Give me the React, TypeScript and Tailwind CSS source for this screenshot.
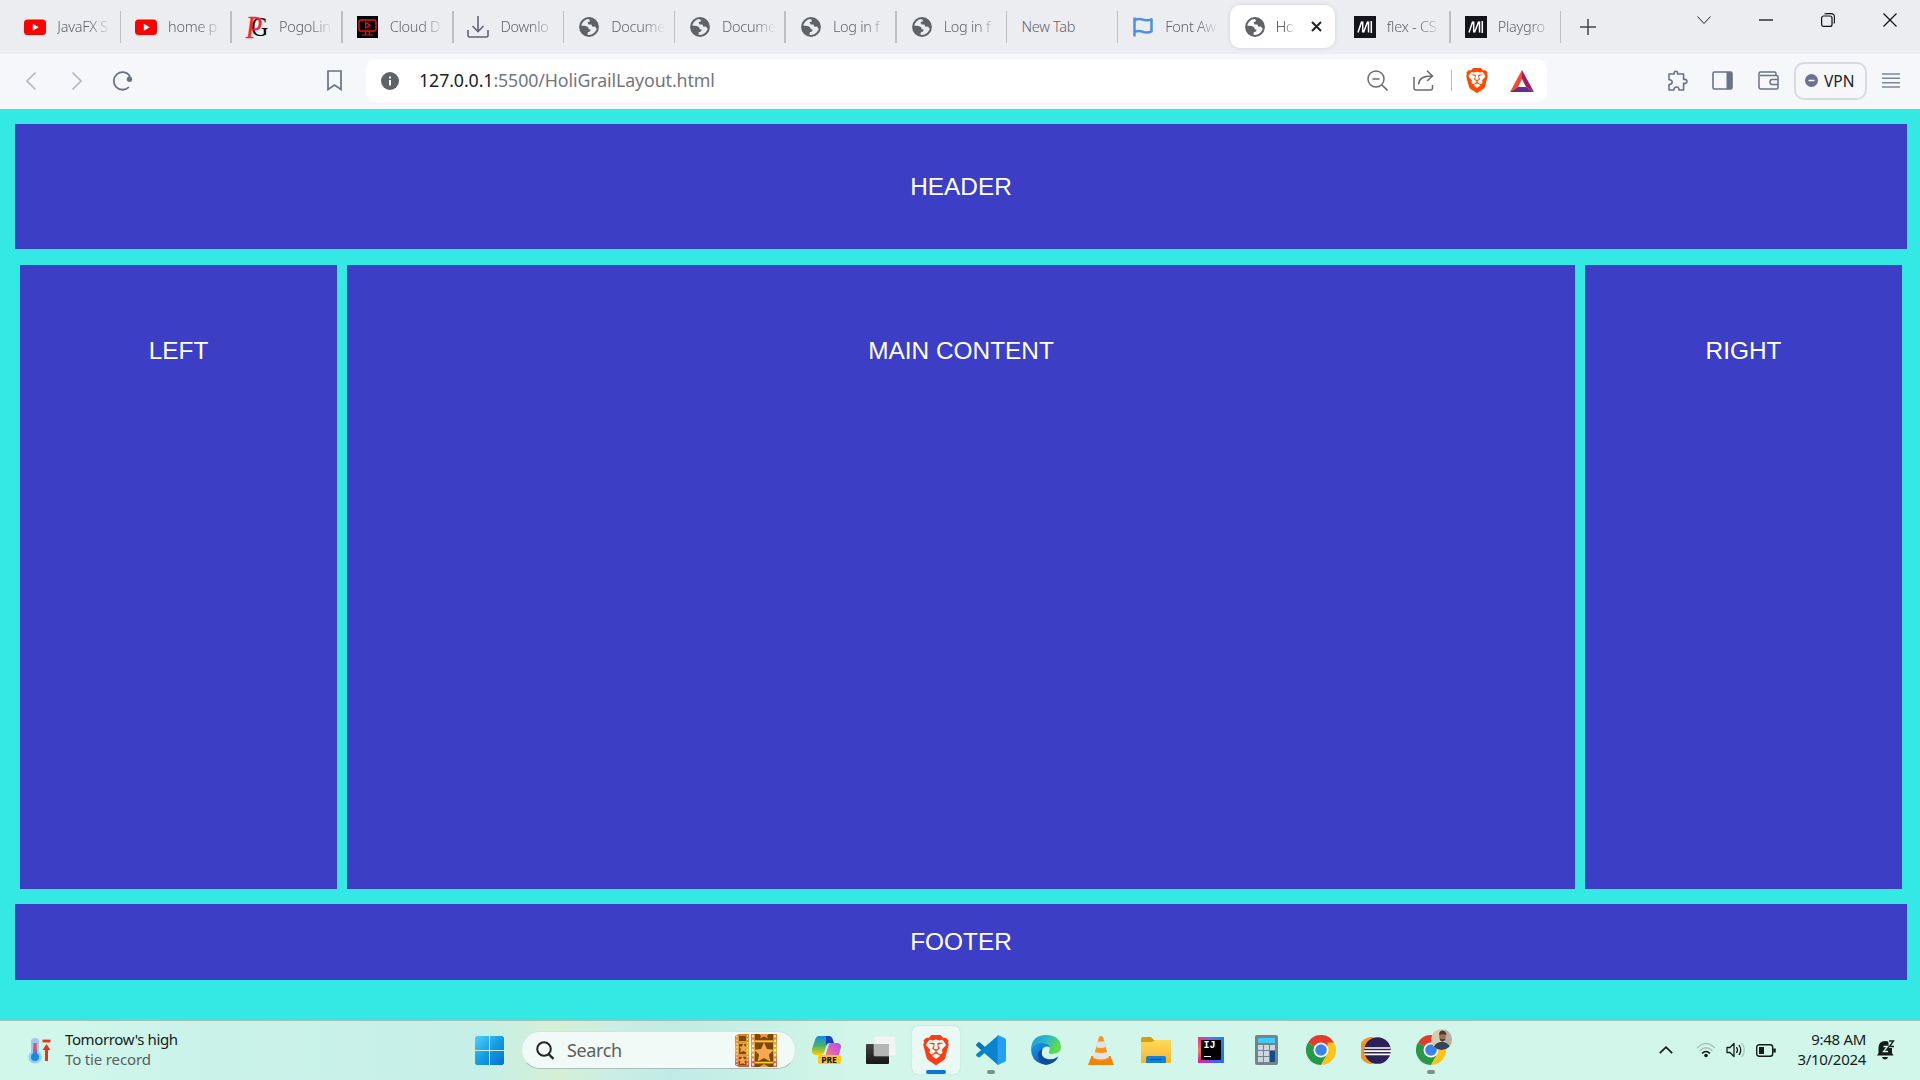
import React from 'react';
import { SiBrave } from 'react-icons/si';

type P = { children?: React.ReactNode; className?: string };

const Svg = ({ w, h, vb, className = '', children }: P & { w: number; h: number; vb?: string }) => (
  <svg width={w} height={h} viewBox={vb ?? `0 0 ${w} ${h}`} fill="none" preserveAspectRatio="none" className={`block shrink-0 ${className}`}>
    {children}
  </svg>
);

const YouTube = () => (
  <Svg w={22} h={22}>
    <rect y="3.5" width="22" height="15.5" rx="3.5" fill="#f00" />
    <path d="M8.8 7.8v7l6-3.5z" fill="#fff" />
  </Svg>
);
const Pogo = () => (
  <Svg w={22} h={22} className="overflow-visible font-['Liberation_Serif',serif]">
    <text x="5" y="20" fontSize="28" fill="#080808" textLength="17" lengthAdjust="spacingAndGlyphs">G</text>
    <text x="0" y="21.500" fontSize="32" fontStyle="italic" fill="#fb2230" stroke="#fb2230" strokeWidth=".300" textLength="16" lengthAdjust="spacingAndGlyphs">P</text>
  </Svg>
);
const Cloud = () => (
  <Svg w={21} h={22}>
    <rect width="21" height="22" fill="#000" />
    <rect x="2" y="4" width="17" height="11" rx="2" stroke="#f0141e" strokeWidth="1.4" />
    <path d="M8.7 6.5v5.4l4.5-2.7zM8.5 15v3.5M12.5 15v3.5M5 19h11" stroke="#f0141e" strokeWidth="1.2" />
  </Svg>
);
const Download = () => (
  <Svg w={22} h={22}>
    <path d="M1 14v5.5q0 1.5 1.5 1.5h17q1.5 0 1.5-1.5V14M11 0v15M5.5 10l5.5 5.5 5.5-5.5" stroke="#62627c" strokeWidth="1.6" />
  </Svg>
);
const Globe = () => (
  <Svg w={20} h={20}>
    <circle cx="10" cy="10" r="8.9" stroke="#5f6368" strokeWidth="2" />
    <path d="M8.5 1C11 0 17 2 18.500 7c.8 3-.2 4.700-1.300 4.200l-1.200-1.700-2.600.3-1-2.300H9.600L8.500 5.200l2.300-.7V3z" fill="#5f6368" />
    <path d="M1.200 8.500 6.800 9l2.300 1.200.7 2 1.900.2-.7 2.200-2.200.6-.5 3.500C4 18 .8 14 1.200 8.500z" fill="#5f6368" />
  </Svg>
);
const Flag = () => (
  <Svg w={20} h={20}>
    <path d="M1.500.5v19M1.500 3q4.500-2 8.500-.4 4 1.600 8.500-.3v12q-4.500 2-8.500.5-4-1.500-8.500 0" stroke="#4b8fe8" strokeWidth="2.500" strokeLinejoin="round" />
  </Svg>
);
const Mdn = () => (
  <Svg w={22} h={22}>
    <rect width="22" height="22" fill="#15141a" />
    <path d="M4 16.500 7.700 5.500M8.700 5.500v11M9.500 16.500 13.700 5.500M14.500 5.500v11M17.300 5v12" stroke="#fff" strokeWidth="1.500" />
  </Svg>
);

const tabs: { icon?: React.ReactNode; text: string; active?: boolean; sep?: boolean; small?: boolean }[] = [
  { icon: <YouTube />, text: 'JavaFX S', sep: true },
  { icon: <YouTube />, text: 'home p', sep: true },
  { icon: <Pogo />, text: 'PogoLin', sep: true },
  { icon: <Cloud />, text: 'Cloud D', sep: true },
  { icon: <Download />, text: 'Downlo', sep: true },
  { icon: <Globe />, text: 'Docume', sep: true, small: true },
  { icon: <Globe />, text: 'Docume', sep: true, small: true },
  { icon: <Globe />, text: 'Log in f', sep: true, small: true },
  { icon: <Globe />, text: 'Log in f', sep: true, small: true },
  { text: 'New Tab', sep: true },
  { icon: <Flag />, text: 'Font Aw', small: true },
  { icon: <Globe />, text: 'Ho', active: true },
  { icon: <Mdn />, text: 'flex - CS', sep: true },
  { icon: <Mdn />, text: 'Playgro', sep: true },
];

const Tab = ({ t }: { t: (typeof tabs)[number] }) =>
  t.active ? (
    <div className="w-[110.800px] shrink-0 pt-[5px]">
      <div className="flex h-[43px] w-[105px] items-center rounded-[10px] bg-white pl-[15px] shadow-[0_0_4px_rgba(0,0,0,0.12)]">
        {t.icon}
        <span className="ml-[11px] w-[19px] overflow-hidden mask-r-from-40% whitespace-nowrap text-[#3b3e4f]">{t.text}</span>
        <Svg w={11} h={11} className="ml-[16px]"><path d="m1 1 9 9m0-9-9 9" stroke="#222" strokeWidth="2" /></Svg>
      </div>
    </div>
  ) : (
    <div className="flex h-full w-[110.800px] shrink-0 items-center pr-[0.700px] pl-[13.300px]">
      {t.icon && <div className={`flex w-[33px] shrink-0 ${t.small ? 'pl-px' : ''}`}>{t.icon}</div>}
      <span className={`overflow-hidden whitespace-nowrap text-[#62656c] ${t.icon ? 'w-[54px] mask-r-from-60%' : 'w-[84px]'}`}>{t.text}</span>
      <div className={`ml-auto h-8 w-[1.500px] ${t.sep ? 'bg-[#bfbfbf]' : ''}`} />
    </div>
  );

const Brave = ({ w, h, color }: { w: number; h: number; color: string }) => (
  <div className="grid shrink-0 place-items-center">
    <SiBrave color={color} preserveAspectRatio="none" viewBox="1.600 0 20.800 24" style={{ width: w, height: h }} />
  </div>
);

const TabStrip = () => (
  <div className="flex h-[54px] shrink-0 bg-[#ecedf1] pl-[11px] text-[14.500px] font-light tracking-[-0.020em]">
    {tabs.map((t, i) => <Tab key={i} t={t} />)}
    <Svg w={16} h={16} className="mt-[19px] ml-[18px]"><path d="M8 0v16M0 8h16" stroke="#444" strokeWidth="1.500" /></Svg>
    <div className="mt-[13px] ml-auto flex h-[14px] items-center gap-[48px] pr-[23px]">
      <Svg w={14} h={8}><path d="m.500.500 6.500 7 6.500-7" stroke="#222" /></Svg>
      <Svg w={14} h={2}><path d="M0 1h14" stroke="#111" strokeWidth="1.300" /></Svg>
      <Svg w={14} h={14}><rect x=".600" y="3" width="10.400" height="10.400" rx="2" stroke="#111" strokeWidth="1.200" /><path d="M3.500 1Q4.500.600 5.500.600h4.500q3.400 0 3.400 3.400v4.500q0 1-.600 2" stroke="#111" strokeWidth="1.100" /></Svg>
      <Svg w={14} h={14}><path d="m.500.500 13 13m0-13-13 13" stroke="#111" strokeWidth="1.200" /></Svg>
    </div>
  </div>
);

const Toolbar = () => (
  <div className="flex h-[55px] shrink-0 items-center bg-[#f5f7fa] pb-[2px]">
    <Svg w={10} h={18} className="ml-[26px]"><path d="M9.500.500 1 9l8.500 8.500" stroke="#b6bac4" strokeWidth="1.700" /></Svg>
    <Svg w={10} h={18} className="ml-[36px]"><path d="M.500.500 9 9 .500 17.500" stroke="#b6bac4" strokeWidth="1.700" /></Svg>
    <Svg w={21} h={20} className="ml-[30px]">
      <path d="M17.500 4.500A8.800 8.800 0 1 0 17 16" stroke="#687485" strokeWidth="1.800" />
      <path d="M17.500 4v4" stroke="#687485" strokeWidth="1.800" /><circle cx="17.500" cy="8.300" r="2.700" fill="#687485" />
    </Svg>
    <Svg w={15} h={21} className="ml-[194px]"><path d="M1 1h13v18.500L7.500 15 1 19.500z" stroke="#687485" strokeWidth="1.700" /></Svg>
    <div className="ml-[24px] flex h-[43px] w-[1181px] shrink-0 items-center rounded-[10px] bg-white pl-[15px]">
      <Svg w={18} h={18}><circle cx="9" cy="9" r="9" fill="#5f6368" /><path d="M9 8v5.500M9 4.500v2" stroke="#fff" strokeWidth="2" /></Svg>
      <div className="mb-px ml-[20px] w-[320px] text-[17.800px] leading-6 font-normal tracking-[-0.006em] whitespace-nowrap text-[#73767c]">
        <span className="text-[#222]">127.0.0.1</span>:5500/HoliGrailLayout.html
      </div>
      <Svg w={21} h={21} className="ml-[628px]"><circle cx="9" cy="9" r="8" stroke="#6b6b6b" strokeWidth="1.500" /><path d="M5.500 9h7M15 15l5.500 5.500" stroke="#6b6b6b" strokeWidth="1.600" /></Svg>
      <Svg w={21} h={21} className="ml-[25px]"><path d="M1 7v11q0 2 2 2h14.500q2 0 2-2v-3M5.500 14.500Q6 6 18.500 6M14 .800 19.500 6 14 11" stroke="#6b6b6b" strokeWidth="1.500" /></Svg>
      <div className="mr-[14px] ml-[17px] h-[21px] w-px bg-[#b5b5b5]" />
      <Brave w={22} h={25} color="#ff4a00" />
      <Svg w={24} h={22} className="ml-[22px]">
        <path d="M12 0 0 22l8-5 4-8z" fill="#ff4724" /><path d="M12 0 24 22l-8-5-4-8z" fill="#9e1f63" /><path d="M0 22h24l-8-5H8z" fill="#662d91" />
      </Svg>
    </div>
    <Svg w={21} h={21} className="ml-[120px]">
      <path d="M2 4h5.200C6 .500 11.700.500 10.600 4h6v5.500c4.500-1.200 4.500 5 0 3.700V20h-4.600c.500-4-5.400-4-5 0H2v-5.500c4.200 0 4.200-5 0-4.800z" stroke="#687485" strokeWidth="1.600" strokeLinejoin="round" />
    </Svg>
    <Svg w={21} h={19} className="ml-[24px]"><rect x="1" y="1" width="19" height="17" rx="1.500" stroke="#687485" strokeWidth="1.600" /><path d="M14.500 1H20v17h-5.500z" fill="#687485" /></Svg>
    <Svg w={21} h={19} className="ml-[25px]">
      <path d="M18 4.500V2.500Q18 1 16.500 1h-14Q1 1 1 2.500V16q0 2 2 2h15.500q1.500 0 1.500-1.500V6q0-1.500-1.500-1.500H2M20 8.500h-6q-2 0-2 2.500t2 2.500h6" stroke="#687485" strokeWidth="1.500" />
    </Svg>
    <div className="ml-[15px] flex h-[38px] w-[73px] shrink-0 items-center rounded-[10px] border-2 border-[#d8dbe2] pl-[9px] text-[15.500px] leading-5 text-[#222]">
      <Svg w={13} h={13}><circle cx="6.500" cy="6.500" r="6.500" fill="#6b7094" /><path d="M3.500 6.500h6" stroke="#fff" strokeWidth="1.500" /></Svg>
      <span className="ml-[6px]">VPN</span>
    </div>
    <Svg w={18} h={15} className="ml-[15px]"><path d="M0 1h18M0 5.300h18M0 9.700h18M0 14h18" stroke="#7c8799" strokeWidth="1.400" /></Svg>
  </div>
);

const Panel = ({ children, className = '' }: P) => (
  <div className={`bg-[#3c3fc6] text-center font-['Liberation_Sans',sans-serif] text-[24.400px] leading-[28px] text-white ${className}`}>{children}</div>
);

const Page = () => (
  <div className="h-[911px] shrink-0 bg-[#34e8e4] pt-[15px] pr-[13px] pl-[15px]">
    <Panel className="h-[125px] pt-[49px]">HEADER</Panel>
    <div className="mt-4 flex h-[624px] gap-[10px] px-[5px]">
      <Panel className="w-[317px] shrink-0 pt-[72px]">LEFT</Panel>
      <Panel className="flex-1 pt-[72px]">MAIN CONTENT</Panel>
      <Panel className="w-[317px] shrink-0 pt-[72px]">RIGHT</Panel>
    </div>
    <Panel className="mt-[15px] h-[76px] pt-[24px]">FOOTER</Panel>
  </div>
);

const Windows = () => (
  <Svg w={29} h={29}>
    <defs><linearGradient id="win" x1="0" y1="0" x2="29" y2="29" gradientUnits="userSpaceOnUse"><stop stopColor="#4fd0fb" /><stop offset=".500" stopColor="#159ce4" /><stop offset="1" stopColor="#0470d0" /></linearGradient></defs>
    <path d="M1.500 0H14v14H0V1.500zM15 0h12.500L29 1.500V14H15zM0 15h14v14H1.500L0 27.500zM15 15h14v12.500L27.500 29H15z" fill="url(#win)" />
  </Svg>
);
const star = 'M13 5.500l3 6.500 7 .800-5 4.700 1.300 7-6.300-3.400-6.300 3.400 1.300-7-5-4.700 7-.800z';
const Film = () => (
  <Svg w={42} h={33}>
    <defs><linearGradient id="film" x1="0" y1="0" x2="0" y2="1"><stop stopColor="#d9812c" /><stop offset=".500" stopColor="#efb034" /><stop offset="1" stopColor="#d0564f" /></linearGradient></defs>
    <path d="M0 2 4 0h10v33H4l-4-2z" fill="url(#film)" /><path d="M4 2h7v5H4zM4 10h7v10H4zM4 23h7v8H4z" fill="#7a4a00" />
    <path d="m8.500 9 1.500 3.500 3 .300-2.500 2.200 1 3.500-3-1.500-3.500 1.500 1-3.500L4 12.800l3-.300zM7.500 22l1.500 3 3 .300-2.500 2.200 1 3-3-1.300-3 1.300 1-3L3 25.300l3-.300z" fill="#f4a64b" />
    <path d="M2 2v29M12.500 1v31" stroke="#ffe9c9" strokeWidth="1.200" strokeDasharray="1.500 2" />
    <path d="M16 0h26v33H16z" fill="url(#film)" /><path d="M20 0h18v6H20zM20 8.500h18v19H20zM20 30h18v3H20z" fill="#7a4a00" />
    <g transform="translate(16 3)"><path d={star} fill="#f8a850" /></g><path d="m24 0 2 2-1 2.500 4-2 4 2-1-2.500 2-2zM24 33l5-3 5 3z" fill="#f4953f" />
    <path d="M18 1v32M40 1v32" stroke="#fff0d5" strokeWidth="1.800" strokeDasharray="2.500 2.200" /><path d="M20 7.500h18M20 28.500h18" stroke="#f3d338" />
    <path d="M15 0v33" stroke="#f1faf6" strokeWidth="2" />
  </Svg>
);
const Copilot = () => (
  <div className="relative">
    <Svg w={29} h={28}>
      <defs>
        <linearGradient id="c1" x1="0" y1="0" x2="0" y2="1"><stop stopColor="#118ee8" /><stop offset=".500" stopColor="#45b26a" /><stop offset="1" stopColor="#ffd000" /></linearGradient>
        <linearGradient id="c2" x1="1" y1="0" x2="0" y2="1"><stop stopColor="#a452ee" /><stop offset=".500" stopColor="#e260b8" /><stop offset="1" stopColor="#ff9150" /></linearGradient>
      </defs>
      <path d="M7 0h10l-4 14q-1 5-5 5H3q-4-1-3-6L3 4q1-4 4-4z" fill="url(#c1)" />
      <path d="M14 0h3q3 0 4 4l1 3h-4q-3 0-4 3z" fill="#1741c4" />
      <path d="M19 7h6q4 0 4 4l-2 8q-1 4-5 5H12l4-13q1-4 3-4z" fill="url(#c2)" />
      <path d="M8 19h6v4h-4z" fill="#ffb42c" />
    </Svg>
    <span className="absolute top-[19px] left-[6px] h-[9px] w-[23px] rounded-[2px] bg-[#ffc814] text-center font-['Open_Sans',sans-serif] text-[8.500px] leading-[9px] font-bold text-black">PRE</span>
  </div>
);
const Desktop = () => (
  <Svg w={30} h={28}>
    <defs><linearGradient id="dk" x1="0" y1="0" x2="0" y2="1"><stop stopColor="#444" /><stop offset="1" stopColor="#161616" /></linearGradient></defs>
    <rect y="8" width="23" height="20" rx="1" fill="url(#dk)" /><rect x="8" width="22" height="20" rx="1" fill="#f2f4f3" stroke="#ddd" strokeWidth=".500" /><path d="M8 8h15v12H8z" fill="#b5b5b5" />
  </Svg>
);
const VSCode = () => (
  <Svg w={30} h={30}>
    <path d="m22 0-13 12-5-4.500q-1-.800-2 0L.500 9q-.800 1 0 2L22 29.500l.500-8.500L9 12z" fill="#0c73b9" />
    <path d="M22 30 8.500 18 4 22q-1 .800-2 0L.500 21q-.800-1 0-2L22 .500V8z" fill="#0a83cf" />
    <path d="M22 0l7 3.200q1 .600 1 1.800v20q0 1.200-1 1.800L22 30q-.500 0-.500-1V1q0-1 .500-1z" fill="#23a0ef" />
  </Svg>
);
const Edge = () => (
  <Svg w={30} h={30}>
    <defs>
      <linearGradient id="e1" x1="0" y1="0" x2="1" y2=".400"><stop stopColor="#1c96db" /><stop offset=".500" stopColor="#27b8cf" /><stop offset="1" stopColor="#63dd48" /></linearGradient>
      <linearGradient id="e2" x1="0" y1="0" x2=".600" y2="1"><stop stopColor="#1b9de2" /><stop offset="1" stopColor="#0a5bbd" /></linearGradient>
    </defs>
    <path d="M0 14Q1 0 15 0q14 0 15 12 0 7-9 7-5 0-2.500-3Q20 9 12 8 4 8 0 14z" fill="url(#e1)" />
    <path d="M0 14Q4 7 11 8q6 0 8 4-6-2-8 3-2 9 7 13-3 2-7 1Q0 26 0 14z" fill="url(#e2)" />
    <path d="M11.500 14q-3 8 5 10 6 1 11-2.500Q24 29 15 30 7 28 7 20q0-4 4.500-6z" fill="#114a9b" />
  </Svg>
);
const Vlc = () => (
  <Svg w={26} h={29}>
    <path d="M3.500 20h19l3.500 9H0z" fill="#f08408" /><path d="M11 1q2-2 4 0l6 22q-8 4-16 0z" fill="#f79420" />
    <path d="m9.800 5.500h6.400l1.600 5.500q-5 2-9.600 0zM6.600 16q6.400 2 12.800 0l1.600 5.500q-8 4-16 0z" fill="#e2e2e8" />
  </Svg>
);
const Folder = () => (
  <Svg w={30} h={27}>
    <defs><linearGradient id="fd" x1="0" y1="0" x2="0" y2="1"><stop stopColor="#ffd95c" /><stop offset="1" stopColor="#f8b52c" /></linearGradient></defs>
    <path d="M0 2q0-2 2-2h8l3 3h15q2 0 2 2v5H0z" fill="#dc9c0c" /><path d="M0 5h11l3-2h14q2 0 2 2v21H0z" fill="url(#fd)" />
    <path d="M5 26v-5q0-2 2-2h16q2 0 2 2v5z" fill="#1381d8" /><path d="M9 22.500h12" stroke="#0b5597" strokeWidth="1.200" />
  </Svg>
);
const Idea = () => (
  <div className="h-[26px] w-[26px] bg-[conic-gradient(from_270deg,#ff7b55,#ef3390_12%,#8b59ef_22%,#168bf8_35%,#087cff_60%,#7049ff_75%,#dc2890_88%,#ff7b55)] p-[3px]">
    <div className="h-5 w-5 bg-black pl-[2.500px] font-['Liberation_Mono',monospace] text-[10px] leading-[12px] font-bold text-white">IJ<div className="mt-[3.500px] h-px w-[7px] bg-white" /></div>
  </div>
);
const Calc = () => (
  <Svg w={23} h={30}>
    <rect width="23" height="30" rx="2" fill="#74838f" /><rect x="3" y="3" width="17" height="5" rx=".500" fill="#40cdf5" />
    <path d="M3 10h5v5H3zM9 10h5v5H9zM15 10h5v5h-5zM3 16h5v5H3zM9 16h5v5H9zM3 22h5v5H3zM9 22h5v5H9z" fill="#cdd6dc" /><path d="M15 16h5v11h-5z" fill="#114c8b" />
  </Svg>
);
const Chrome = () => (
  <Svg w={30} h={30}>
    <path d="M15 15 2 7.500a15 15 0 0 1 26 0z" fill="#e33b2e" /><path d="M2 7.500a15 15 0 0 0 13 22.500l6.500-11.300L15 15z" fill="#279847" /><path d="M28 7.500A15 15 0 0 1 15 30l6.500-11.300V7.500z" fill="#fcc419" />
    <circle cx="15" cy="15" r="7.500" fill="#fff" /><circle cx="15" cy="15" r="5.800" fill="#3b82ee" />
  </Svg>
);
const Eclipse = () => (
  <Svg w={30} h={27}>
    <path d="M11 0A13.500 13.500 0 0 0 11 27L16 24V2z" fill="#f7941e" /><circle cx="16.500" cy="13.500" r="13.300" fill="#2c2255" />
    <path d="M3.500 11h26M3 14.200h27M3.500 17.300h26" stroke="#fff" strokeWidth="1.700" />
  </Svg>
);
const ChromeProfile = () => (
  <div className="relative">
    <Chrome />
    <Svg w={21} h={21} className="absolute -top-[6px] left-[15px]">
      <clipPath id="av"><circle cx="10.500" cy="10.500" r="10.500" /></clipPath>
      <g clipPath="url(#av)"><path d="M0 0h21v21H0z" fill="#d6ccb3" /><path d="M14 0h7v21h-7z" fill="#b5b19f" /><path d="M2 21q1-7 7-8h4q6 2 7 8z" fill="#34425c" /><circle cx="11.500" cy="7.500" r="3.300" fill="#9c7056" /><path d="M8 6q0-4.500 3.500-4.500T15.500 6q-4-1.500-7.500 0zM8.500 9.500q3 1.500 6 0-.500 3-3 3t-3-3z" fill="#4a372e" /></g>
    </Svg>
  </div>
);

const apps: { icon: React.ReactNode; active?: boolean; dot?: boolean }[] = [
  { icon: <Copilot /> },
  { icon: <Desktop /> },
  { icon: <Brave w={26} h={30} color="#fb3c14" />, active: true },
  { icon: <VSCode />, dot: true },
  { icon: <Edge /> },
  { icon: <Vlc /> },
  { icon: <Folder /> },
  { icon: <Idea /> },
  { icon: <Calc /> },
  { icon: <Chrome /> },
  { icon: <Eclipse /> },
  { icon: <ChromeProfile />, dot: true },
];

const Taskbar = () => (
  <div className="flex h-[60px] shrink-0 items-center border-t border-[#a9bdb9] bg-[linear-gradient(90deg,#d0f7ea_0,#d0f7ea_80px,#cbf3e9_170px,#c6efe8_480px,#d5efd5_560px,#caeee4_610px,#c0ebe5_670px,#cbf3e6_800px,#d2f6e9_850px,#d1f6ea_1920px)] pb-px">
    <div className="flex w-[475px] shrink-0 items-center pl-[28px]">
      <Svg w={24} h={29}>
        <path d="M3 6a4 4 0 0 1 8 0v10a6.500 6.500 0 1 1-8 0z" fill="#9cc9f5" /><path d="M7 7v12" stroke="#e8506b" strokeWidth="3.500" /><path d="M7 13v6" stroke="#7a68b8" strokeWidth="3.500" /><circle cx="7" cy="21" r="4" fill="#138be0" />
        <path d="M14.500 5h8" stroke="#fb2a14" strokeWidth="2.800" /><path d="M18.500 25V11" stroke="#fb2a14" strokeWidth="3" /><path d="m14.500 14 4-6 4 6z" fill="#fb2a14" />
      </Svg>
      <div className="mb-[3px] ml-[13px] text-[15px] leading-[20px] tracking-[-0.025em] text-[#161c1a]">
        <div>Tomorrow's high</div>
        <div className="tracking-[-0.010em] text-[#56625e]">To tie record</div>
      </div>
    </div>
    <Windows />
    <div className="ml-[17px] flex h-[38px] w-[275px] shrink-0 items-center rounded-full border border-b-[#a9bdb9] border-[#d3e6de] bg-[#f1faf6] pl-[14px]">
      <Svg w={18} h={19}><circle cx="8" cy="8" r="6.800" stroke="#252525" strokeWidth="2" /><path d="m12.500 13 5 5" stroke="#252525" strokeWidth="2.400" /></Svg>
      <span className="ml-[13px] w-[168px] text-[18px] leading-6 tracking-[-0.020em] text-[#5a605e]">Search</span>
      <Film />
    </div>
    <div className="ml-[2.500px] flex h-full items-center">
      {apps.map((a, i) => (
        <div key={i} className="relative grid h-full w-[55px] place-items-center">
          <div className={`grid h-12 w-12 place-items-center rounded-[6px] ${a.active ? 'bg-[#eaf9f4] shadow-[0_0_1px_#9bb]' : ''}`}>{a.icon}</div>
          {a.active && <div className="absolute bottom-[5px] left-[17.500px] h-1 w-5 rounded-full bg-[#0876d8]" />}
          {a.dot && <div className="absolute bottom-[5px] left-[23.500px] h-1 w-2 rounded-full bg-[#7a928b]" />}
        </div>
      ))}
    </div>
    <div className="ml-auto flex items-center pr-[25px]">
      <Svg w={14} h={8}><path d="m.800 7.200 6.200-6 6.200 6" stroke="#161c1a" strokeWidth="1.700" /></Svg>
      <Svg w={20} h={16} className="ml-[23px]">
        <path d="M1 6q9-9 18 0" stroke="#a7c3bb" strokeWidth="1.300" /><path d="M3.500 9q6.500-6.500 13 0" stroke="#a7c3bb" strokeWidth="1.300" /><path d="M6 11.500q4-4 8 0" stroke="#161c1a" strokeWidth="1.600" /><circle cx="10" cy="13.500" r="1.800" fill="#161c1a" />
      </Svg>
      <Svg w={20} h={16} className="ml-[10px]">
        <path d="M1 5.500h3L8 1.500v13l-4-4H1z" stroke="#161c1a" strokeWidth="1.300" strokeLinejoin="round" /><path d="M10.500 5q2 3 0 6M13 3q3.500 5 0 10" stroke="#161c1a" strokeWidth="1.300" /><path d="M15.800 1q5 7 0 14" stroke="#a7c3bb" strokeWidth="1.200" />
      </Svg>
      <Svg w={20} h={13} className="ml-[10px]"><rect x=".700" y=".700" width="16" height="11.600" rx="2.500" stroke="#161c1a" strokeWidth="1.400" /><path d="M3 3h5v7H3z" fill="#161c1a" /><path d="M18.500 4.500v4" stroke="#161c1a" strokeWidth="2.500" /></Svg>
      <div className="mb-[3px] ml-[12px] w-[78px] text-right text-[15px] leading-[20px] tracking-[-0.020em] text-[#161c1a]">
        <div>9:48 AM</div>
        <div>3/10/2024</div>
      </div>
      <Svg w={18} h={20} className="ml-[11px] overflow-visible">
        <path d="M1.500 8q0-7 7-7 6 0 6.500 7v5l1.500 2.500H0L1.500 13zM5 17h6q-.500 2.500-3 2.500T5 17z" fill="#161c1a" />
        <path d="M6.500 6.500h4l-4 5h4.500" stroke="#d1f6ea" strokeWidth="1.300" />
        <path d="M11 0h7v8h-6z" fill="#d1f6ea" />
        <path d="M12 1h4.500L12.500 6.500H17" stroke="#161c1a" strokeWidth="1.400" />
      </Svg>
    </div>
  </div>
);

export default function App() {
  return (
    <div className="flex h-[1080px] w-[1920px] flex-col overflow-hidden font-['Noto_Sans',sans-serif]">
      <TabStrip />
      <Toolbar />
      <Page />
      <Taskbar />
    </div>
  );
}
